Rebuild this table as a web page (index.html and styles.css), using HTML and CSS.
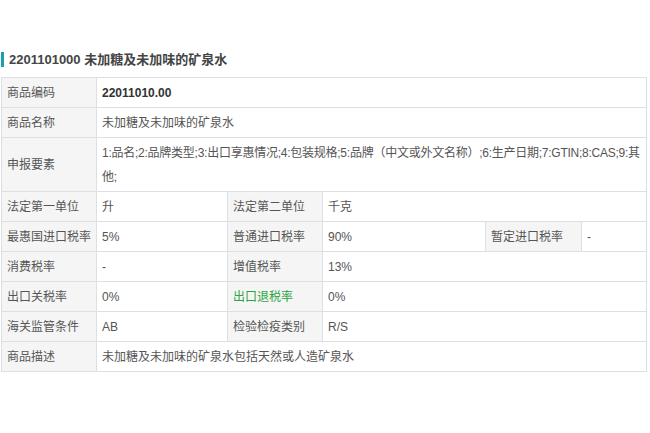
FILE: index.html
```html
<!DOCTYPE html>
<html lang="zh-CN">
<head>
<meta charset="utf-8">
<title>2201101000 未加糖及未加味的矿泉水</title>
<link rel="stylesheet" href="styles.css">
</head>
<body>
<div class="page">
  <h2 class="title">2201101000 未加糖及未加味的矿泉水</h2>
  <table class="info">
    <colgroup>
      <col class="c-label"><col class="c2"><col class="c-label"><col class="c4"><col class="c-label5"><col class="c6">
    </colgroup>
    <tbody>
      <tr><th>商品编码</th><td colspan="5" class="strong">22011010.00</td></tr>
      <tr><th>商品名称</th><td colspan="5">未加糖及未加味的矿泉水</td></tr>
      <tr><th>申报要素</th><td colspan="5" class="tight">1:品名;2:品牌类型;3:出口享惠情况;4:包装规格;5:品牌（中文或外文名称）;6:生产日期;7:GTIN;8:CAS;9:其<br>他;</td></tr>
      <tr><th>法定第一单位</th><td>升</td><th>法定第二单位</th><td colspan="3">千克</td></tr>
      <tr><th>最惠国进口税率</th><td>5%</td><th>普通进口税率</th><td>90%</td><th>暂定进口税率</th><td>-</td></tr>
      <tr><th>消费税率</th><td>-</td><th>增值税率</th><td colspan="3">13%</td></tr>
      <tr><th>出口关税率</th><td>0%</td><th class="green">出口退税率</th><td colspan="3">0%</td></tr>
      <tr><th>海关监管条件</th><td>AB</td><th>检验检疫类别</th><td colspan="3">R/S</td></tr>
      <tr><th>商品描述</th><td colspan="5">未加糖及未加味的矿泉水包括天然或人造矿泉水</td></tr>
    </tbody>
  </table>
</div>
</body>
</html>
```

FILE: styles.css
```css
html, body {
  margin: 0;
  padding: 0;
  background: #ffffff;
}

body {
  font-family: "Liberation Sans", "Noto Sans CJK SC", sans-serif;
  color: #555555;
  font-size: 12px;
}

.page {
  padding: 52px 0 0 1px;
}

.title {
  margin: 0 0 10px 0;
  border-left: 3px solid #1a9fae;
  padding-left: 5px;
  font-size: 13px;
  line-height: 15px;
  font-weight: bold;
  color: #444444;
}

.info {
  border-collapse: collapse;
  table-layout: fixed;
  width: 645px;
}

.c-label { width: 95px; }
.c2 { width: 131px; }
.c4 { width: 163px; }
.c-label5 { width: 96px; }
.c6 { width: 65px; }

.info th,
.info td {
  border: 1px solid #dcdfe3;
  padding: 2.5px 5px;
  line-height: 24px;
  text-align: left;
  vertical-align: middle;
  font-weight: normal;
  white-space: nowrap;
}

.info td.tight {
  letter-spacing: -0.25px;
}

.info th {
  background: #f5f5f5;
  color: #555555;
}

.info td {
  color: #555555;
}

.info td.strong {
  font-weight: bold;
  color: #333333;
}

.info th.green {
  color: #2aa53f;
}
```
